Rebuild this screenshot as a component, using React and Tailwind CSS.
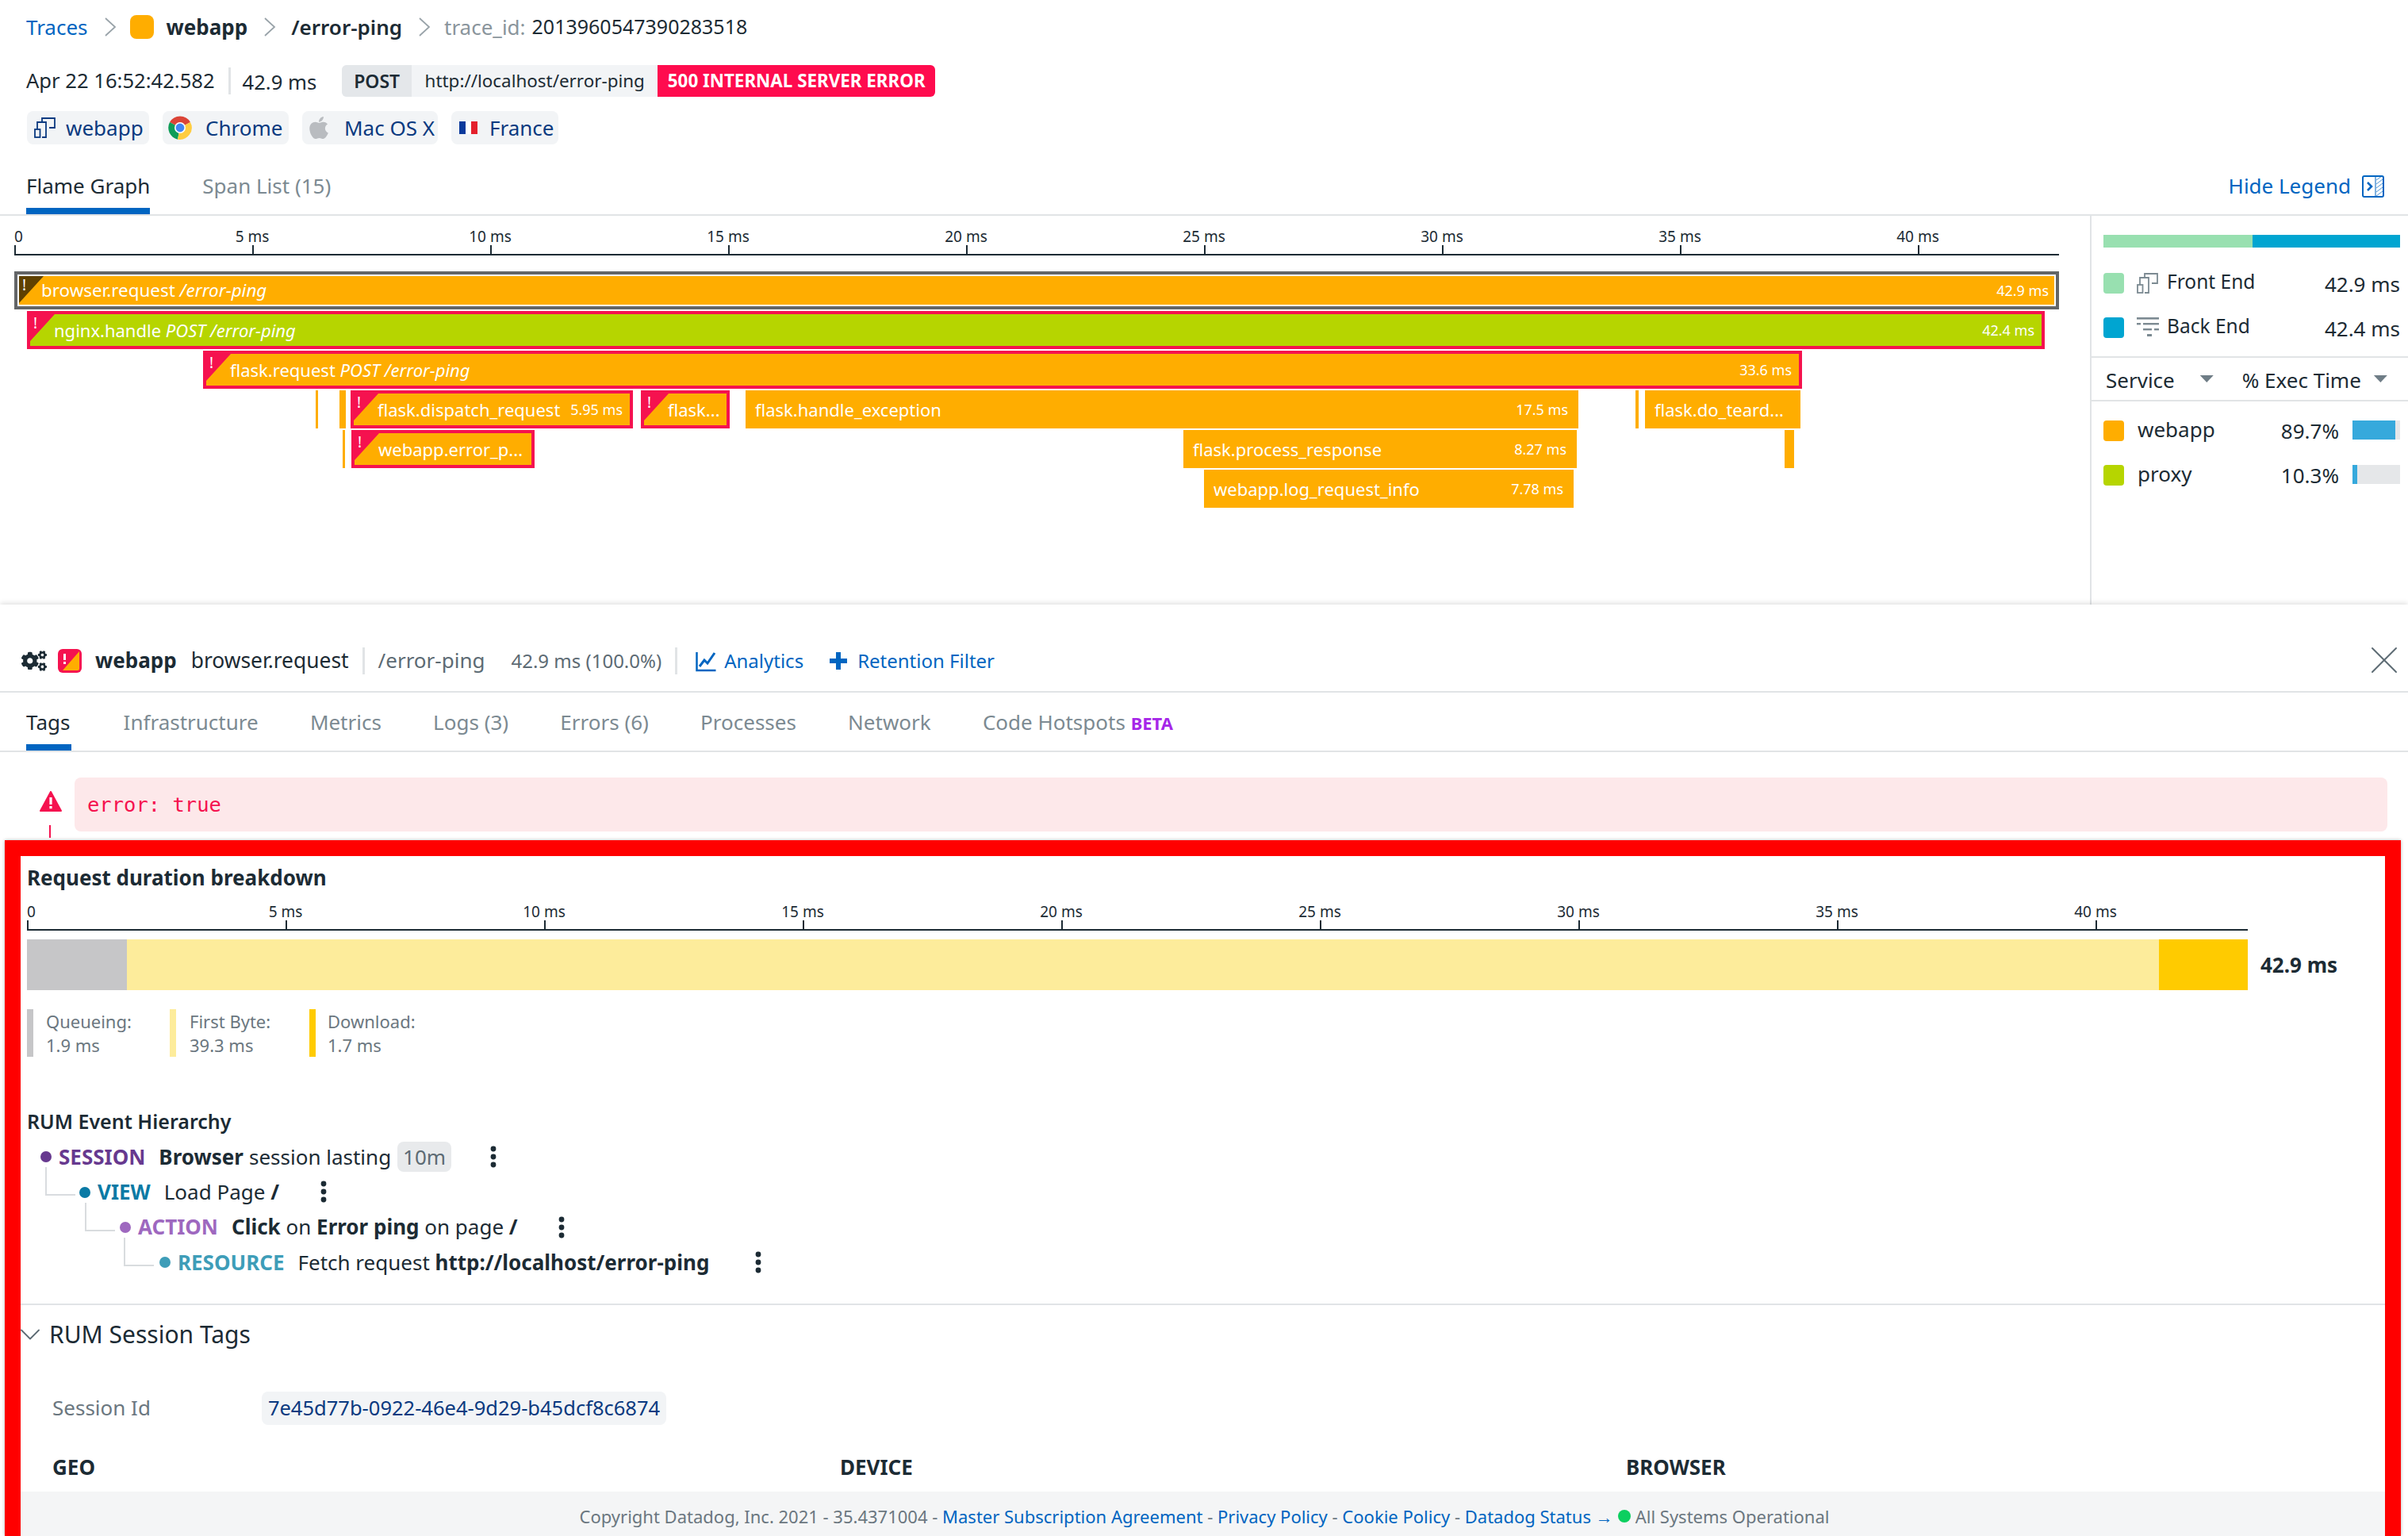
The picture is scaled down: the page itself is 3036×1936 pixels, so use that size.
import React from "react";
import { ChevronDown, X } from "lucide-react";
import { FaApple, FaCogs } from "react-icons/fa";

// flame graph spans, positions are in px on the graph canvas
const spans = [
  { l: 18, w: 2578, t: 70, label: "browser.request", sub: "/error-ping", time: "42.9 ms", kind: "selected" },
  { l: 34, w: 2544, t: 120, label: "nginx.handle", sub: "POST /error-ping", time: "42.4 ms", kind: "error", color: "bg-[#b6d500]" },
  { l: 256, w: 2016, t: 170, label: "flask.request", sub: "POST /error-ping", time: "33.6 ms", kind: "error" },
  { l: 398, w: 3, t: 220 },
  { l: 428, w: 8, t: 220 },
  { l: 442, w: 356, t: 220, label: "flask.dispatch_request", time: "5.95 ms", kind: "error" },
  { l: 808, w: 112, t: 220, label: "flask...", kind: "error" },
  { l: 940, w: 1050, t: 220, label: "flask.handle_exception", time: "17.5 ms" },
  { l: 2062, w: 4, t: 220 },
  { l: 2074, w: 196, t: 220, label: "flask.do_teard..." },
  { l: 432, w: 3, t: 270 },
  { l: 443, w: 231, t: 270, label: "webapp.error_p...", kind: "error" },
  { l: 1492, w: 496, t: 270, label: "flask.process_response", time: "8.27 ms" },
  { l: 2250, w: 12, t: 270 },
  { l: 1518, w: 466, t: 320, label: "webapp.log_request_info", time: "7.78 ms" },
];

const flameTicks = [0, 5, 10, 15, 20, 25, 30, 35, 40];

const Crumb = ({ className }) => (
  <svg viewBox="0 0 16 24" fill="none" stroke="#99a3a9" strokeWidth="1.8" className={`w-[16px] h-[24px] shrink-0 ${className}`}>
    <path d="M2 1l12 11L2 23" />
  </svg>
);

const FrontEndIcon = ({ className }) => (
  <svg viewBox="0 0 27 26" fill="none" stroke="currentColor" strokeWidth="1.8" className={className}>
    <rect x="1" y="15" width="6.5" height="10" />
    <path d="M4 15V6h11v19h-5" />
    <path d="M10 6V1h16v12h-7" />
  </svg>
);

const BackEndIcon = ({ className }) => (
  <svg viewBox="0 0 28 26" fill="currentColor" className={className}>
    <rect x="0" y="0" width="28" height="2.6" />
    <rect x="0" y="7" width="5" height="2.4" />
    <rect x="8" y="7" width="20" height="2.4" />
    <rect x="8" y="14" width="11" height="2.4" />
    <rect x="22" y="14" width="6" height="2.4" />
    <rect x="13" y="21" width="6" height="3" />
  </svg>
);

const ChromeIcon = () => (
  <svg viewBox="0 0 32 32" className="w-[32px] h-[32px]">
    <path d="M16 16 L3 9 A15 15 0 0 1 29 9 Z" fill="#db4437" />
    <path d="M16 16 L3 9 A15 15 0 0 0 13 30.7 Z" fill="#0f9d58" />
    <path d="M16 16 L29 9 A15 15 0 0 1 13 30.7 Z" fill="#ffcd40" />
    <circle cx="16" cy="16" r="7" fill="#fff" />
    <circle cx="16" cy="16" r="5.4" fill="#4285f4" />
  </svg>
);

const Chip = ({ icon, className, children }) => (
  <div className={`h-[42px] flex items-center rounded-[8px] bg-[#f2f4f6] text-[#0b3a80] text-[26px] ${className}`}>
    {icon}
    {children}
  </div>
);

const Span = ({ span }) => {
  const { l, w, t, label, sub, time, kind, color } = span;
  const bg = color || "bg-[#ffad00]";
  const isError = kind === "error";
  const isSelected = kind === "selected";
  return (
    <div
      className={`absolute h-[48px] text-white ${isSelected ? "text-[22.4px]" : "text-[22px]"} ${
        isSelected ? "border-[4px] border-[#636567]" : isError ? "border-[4px] border-[#f5124f]" : ""
      }`}
      style={{ left: l, width: w, top: t }}
    >
      <div className={`relative h-full flex items-center justify-between whitespace-nowrap ${bg} ${isSelected ? "border-[2px] border-white" : ""}`}>
        {(isError || isSelected) && (
          <>
            <div className={`absolute top-0 left-0 w-[31px] h-[34px] [clip-path:polygon(0_0,100%_0,0_100%)] ${isSelected ? "bg-[#5f4100]" : "bg-[#f5124f]"}`} />
            <span className="absolute left-[4px] top-[1px] text-[19px] leading-[20px]">!</span>
          </>
        )}
        {label && (
          <span className={isError ? "pl-[30px]" : isSelected ? "pl-[28px]" : "pl-[12px]"}>
            {label} {sub && <i>{sub}</i>}
          </span>
        )}
        {time && <span className={`text-[18px] ${isError ? "pr-[9px]" : isSelected ? "pr-[7px]" : "pr-[13px]"}`}>{time}</span>}
      </div>
    </div>
  );
};

const Caret = () => <div className="w-[17px] h-[9px] bg-[#6f7d86] [clip-path:polygon(0_0,100%_0,50%_100%)]" />;

const Swatch = ({ color }) => <div className={`w-[26px] h-[26px] rounded-[4px] shrink-0 ${color}`} />;

const Dots = ({ className }) => (
  <svg viewBox="0 0 8 28" fill="#1c2b34" className={`w-[8px] h-[28px] absolute ${className}`}>
    <circle cx="4" cy="4" r="3.4" />
    <circle cx="4" cy="14" r="3.4" />
    <circle cx="4" cy="24" r="3.4" />
  </svg>
);

const Elbow = ({ className }) => <div className={`absolute w-[38px] h-[36px] border-l-2 border-b-2 border-[#d9dcdf] ${className}`} />;

const Hierarchy = ({ indent, dot, tagColor, tag, children }) => (
  <div className="h-[44.4px] flex items-center text-[26px] whitespace-nowrap relative" style={{ paddingLeft: indent }}>
    <div className={`w-[14px] h-[14px] rounded-full ${dot}`} />
    <span className={`ml-[9px] mr-[17px] font-bold ${tagColor}`}>{tag}</span>
    {children}
  </div>
);

export default function App() {
  return (
    <div className="w-[3036px] h-[1936px] overflow-hidden bg-white flex flex-col font-['Noto_Sans',sans-serif] text-[#1c2b34]">
      {/* trace header */}
      <div className="h-[762px] shrink-0 flex flex-col">
        <div className="h-[68px] pl-[33px] flex items-center text-[26px] whitespace-nowrap">
          <span className="text-[#0065c1]">Traces</span>
          <Crumb className="ml-[20px]" />
          <div className="w-[30px] h-[30px] ml-[17px] rounded-[8px] bg-[#ffad00]" />
          <span className="ml-[16px] font-bold">webapp</span>
          <Crumb className="ml-[20px]" />
          <span className="ml-[19px] font-semibold">/error-ping</span>
          <Crumb className="ml-[20px]" />
          <span className="ml-[17px] text-[#8a959c]">trace_id:</span>
          <span className="ml-[8px] text-[25px]">2013960547390283518</span>
        </div>
        <div className="mt-[14px] h-[40px] pl-[33px] flex items-center text-[25.6px] whitespace-nowrap">
          <span>Apr 22 16:52:42.582</span>
          <div className="w-[3px] h-[34px] ml-[17px] mr-[15px] bg-[#e1e4e6]" />
          <span className="pt-[4px]">42.9 ms</span>
          <div className="ml-[32px] flex h-[40px] items-center rounded-[6px] overflow-hidden bg-[#f2f4f6] text-[22.4px]">
            <div className="w-[88px] h-full flex items-center justify-center bg-[#e4e7ea] font-semibold text-[23px]">POST</div>
            <div className="w-[310px] h-full flex items-center justify-center">http://localhost/error-ping</div>
            <div className="w-[350px] h-full flex items-center justify-center bg-[#ff0b4e] text-white font-bold">500 INTERNAL SERVER ERROR</div>
          </div>
        </div>
        <div className="mt-[18px] pl-[34px] flex gap-[17px] whitespace-nowrap">
          <Chip className="w-[154px] pl-[9px] gap-[13px]" icon={<FrontEndIcon className="w-[27px] h-[26px] shrink-0" />}>
            webapp
          </Chip>
          <Chip className="w-[159px] pl-[6px] gap-[16px]" icon={<ChromeIcon />}>
            Chrome
          </Chip>
          <Chip className="w-[171px] pl-[6px] gap-[17px]" icon={<FaApple className="w-[30px] h-[32px] text-[#b9bcc0] shrink-0" />}>
            Mac OS X
          </Chip>
          <Chip
            className="w-[135px] pl-[10px] gap-[15px]"
            icon={
              <div className="flex w-[23px] h-[16px] shrink-0">
                <div className="flex-1 bg-[#0b3a9c]" />
                <div className="flex-1 bg-white" />
                <div className="flex-1 bg-[#e4202c]" />
              </div>
            }
          >
            France
          </Chip>
        </div>
        <div className="h-[90px] flex items-end justify-between pl-[33px] pr-[30px] border-b-[2px] border-[#e1e4e6] text-[26px] whitespace-nowrap shrink-0">
          <div className="flex gap-[66px]">
            <div className="h-[55px] border-b-[8px] border-[#0065c1]">Flame Graph</div>
            <div className="text-[#7c8a92]">Span List (15)</div>
          </div>
          <div className="h-[71px] flex items-center gap-[14px] text-[#0065c1]">
            Hide Legend
            <svg viewBox="0 0 28 28" fill="none" stroke="currentColor" className="w-[28px] h-[28px]">
              <rect x="1" y="1" width="26" height="26" rx="2" strokeWidth="2" />
              <path d="M7 9l5 5-5 5" strokeWidth="2.6" />
              <path d="M18 6l7-5M18 11l8-6M18 16l8-6M18 21l8-6M18 26l8-6" strokeWidth="1" opacity="0.7" />
              <path d="M17 1v26" strokeWidth="1" />
            </svg>
          </div>
        </div>
        <div className="flex-1 flex">
          <div className="w-[2635px] relative shrink-0">
            {/* axis */}
            <div className="absolute left-[18px] top-[48px] w-[2578px] h-[2px] bg-[#1c2b34]" />
            {flameTicks.map((tick) => (
              <div key={tick} className="absolute top-[37px] w-[2px] h-[13px] bg-[#1c2b34]" style={{ left: 18 + tick * 60 }}>
                <span className={`absolute -top-[24px] text-[19px] leading-[26px] whitespace-nowrap ${tick === 0 ? "left-0" : "-translate-x-1/2"}`}>
                  {tick === 0 ? "0" : `${tick} ms`}
                </span>
              </div>
            ))}
            {spans.map((s) => (
              <Span key={`${s.l}-${s.t}`} span={s} />
            ))}
          </div>
          {/* legend */}
          <div className="flex-1 border-l-[2px] border-[#e1e4e6] flex flex-col text-[26px] whitespace-nowrap">
            <div className="mt-[24px] mx-[15px] w-[374px] h-[16px] flex">
              <div className="w-[188px] bg-[#98e0b0]" />
              <div className="flex-1 bg-[#00a5d1]" />
            </div>
            <div className="mt-[32px] ml-[15px] w-[374px] h-[26px] flex items-center">
              <Swatch color="bg-[#98e0b0]" />
              <FrontEndIcon className="w-[27px] h-[26px] ml-[16px] text-[#7c8a92]" />
              <span className="ml-[11px] text-[24.5px] pb-[4px]">Front End</span>
              <span className="ml-auto pt-[3px]">42.9 ms</span>
            </div>
            <div className="mt-[30px] ml-[15px] w-[374px] h-[26px] flex items-center">
              <Swatch color="bg-[#00a5d1]" />
              <BackEndIcon className="w-[28px] h-[26px] ml-[16px] text-[#7c8a92]" />
              <span className="ml-[10px] text-[24.5px] pb-[4px]">Back End</span>
              <span className="ml-auto pt-[3px]">42.4 ms</span>
            </div>
            <div className="mt-[23px] h-[57px] border-y-[2px] border-[#e1e4e6] flex items-center pl-[18px]">
              <span className="pt-[3px]">Service</span>
              <div className="ml-[32px]">
                <Caret />
              </div>
              <span className="ml-[36px] pt-[3px]">% Exec Time</span>
              <div className="ml-[16px]">
                <Caret />
              </div>
            </div>
            <div className="mt-[24px] ml-[15px] w-[374px] h-[26px] flex items-center">
              <Swatch color="bg-[#ffad00]" />
              <span className="ml-[17px] pb-[3px]">webapp</span>
              <span className="ml-auto">89.7%</span>
              <div className="ml-[17px] w-[60px] h-[24px] bg-[#e5e7e9] self-start">
                <div className="h-full bg-[#36a9dc]" style={{ width: "89.7%" }} />
              </div>
            </div>
            <div className="mt-[30px] ml-[15px] w-[374px] h-[26px] flex items-center">
              <Swatch color="bg-[#b6d500]" />
              <span className="ml-[17px] pb-[3px]">proxy</span>
              <span className="ml-auto">10.3%</span>
              <div className="ml-[17px] w-[60px] h-[24px] bg-[#e5e7e9] self-start">
                <div className="h-full bg-[#36a9dc]" style={{ width: "10.3%" }} />
              </div>
            </div>
          </div>
        </div>
      </div>

      {/* span panel */}
      <div className="flex-1 min-h-0 flex flex-col shadow-[0_-2px_6px_rgba(0,0,0,0.12)] relative">
        <div className="h-[111px] shrink-0 border-b-[2px] border-[#e1e4e6] flex items-center pl-[27px] pt-[32px] text-[26px] whitespace-nowrap">
          <FaCogs className="w-[32px] h-[30px]" />
          <svg viewBox="0 0 30 30" className="w-[30px] h-[30px] ml-[14px]">
            <rect width="30" height="30" rx="6" fill="#f5124f" />
            <path d="M27 3v22a2 2 0 0 1-2 2H6z" fill="#ffad00" />
            <rect x="7" y="6" width="3" height="8" fill="#fff" />
            <rect x="7" y="16" width="3" height="3" fill="#fff" />
          </svg>
          <span className="ml-[17px] font-bold">webapp</span>
          <span className="ml-[18px] text-[26.4px]">browser.request</span>
          <div className="w-[3px] h-[34px] mx-[17px] bg-[#e1e4e6]" />
          <span className="text-[#5d6b74]">/error-ping</span>
          <span className="ml-[33px] text-[24px] text-[#5d6b74]">42.9 ms (100.0%)</span>
          <div className="w-[3px] h-[34px] ml-[17px] mr-[18px] bg-[#e1e4e6]" />
          <svg viewBox="0 0 26 28" fill="none" stroke="#0065c1" className="w-[26px] h-[28px] ml-[5px]">
            <path d="M1.5 3v23h24" strokeWidth="2.5" />
            <path d="M5 21l6-8 4 4 9-13" strokeWidth="3" />
          </svg>
          <span className="ml-[10px] text-[24px] text-[#0065c1]">Analytics</span>
          <svg viewBox="0 0 22 22" fill="#0065c1" className="w-[22px] h-[22px] ml-[33px]">
            <path d="M8 0h6v8h8v6h-8v8H8v-8H0V8h8z" />
          </svg>
          <span className="ml-[13px] text-[24px] text-[#0065c1]">Retention Filter</span>
          <X className="ml-auto w-[60px] h-[60px] text-[#5d6b74] -mt-[2px]" strokeWidth={0.8} />
        </div>
        <div className="h-[75px] shrink-0 border-b-[2px] border-[#e1e4e6] flex items-end pl-[33px] gap-[65.2px] text-[26px] text-[#7c8a92] whitespace-nowrap">
          <div className="h-[55px] pr-[2px] border-b-[8px] border-[#0065c1] text-[#1c2b34]">Tags</div>
          {["Infrastructure", "Metrics", "Logs (3)", "Errors (6)", "Processes", "Network"].map((t) => (
            <div key={t} className="h-[55px]">
              {t}
            </div>
          ))}
          <div className="h-[55px]">
            Code Hotspots <span className="text-[22px] font-bold text-[#a626e8]">BETA</span>
          </div>
        </div>
        <div className="mt-[32px] h-[68px] shrink-0 flex relative">
          <div className="w-[94px] pl-[50px] pt-[17px] shrink-0">
            <svg viewBox="0 0 28 26" className="w-[28px] h-[26px]">
              <path d="M14 1L1 25h26z" fill="#f5124f" stroke="#f5124f" strokeLinejoin="round" strokeWidth="2" />
              <rect x="12.4" y="8" width="3.2" height="9" fill="#fff" />
              <rect x="12.4" y="19" width="3.2" height="3.2" fill="#fff" />
            </svg>
          </div>
          <div className="absolute left-[62px] top-[60px] w-[2px] h-[16px] bg-[#f5124f]" />
          <div className="w-[2916px] bg-[#fde8ea] rounded-[8px] flex items-center pl-[16px] font-['DejaVu_Sans_Mono',monospace] text-[25.5px] text-[#f5124f]">
            error: true
          </div>
        </div>

        {/* outlined section */}
        <div className="mt-[11px] ml-[6px] w-[3021px] flex-1 min-h-0 border-[20px] border-b-0 border-[#ff0000] shadow-[0_0_4px_rgba(0,0,0,0.3)] flex flex-col">
          <div className="pl-[8px] pt-[9px] h-[46px] text-[26px] leading-[36px] font-bold shrink-0">Request duration breakdown</div>
          <div className="mt-[5px] ml-[8px] w-[2800px] h-[43px] relative shrink-0 border-b-[2px] border-[#1c2b34]">
            {flameTicks.map((tick) => (
              <div key={tick} className="absolute top-[30px] w-[2px] h-[13px] bg-[#1c2b34]" style={{ left: tick * 65.2 }}>
                <span className={`absolute -top-[24px] text-[19px] leading-[26px] whitespace-nowrap ${tick === 0 ? "left-0" : "-translate-x-1/2"}`}>
                  {tick === 0 ? "0" : `${tick} ms`}
                </span>
              </div>
            ))}
          </div>
          <div className="mt-[11px] ml-[8px] h-[64px] flex items-center shrink-0">
            <div className="w-[126px] h-full bg-[#c6c6c8]" />
            <div className="w-[2562px] h-full bg-[#fdec9b]" />
            <div className="w-[112px] h-full bg-[#ffcb00]" />
            <span className="ml-[16px] text-[26px] font-bold">42.9 ms</span>
          </div>
          <div className="mt-[24px] ml-[8px] h-[60px] flex text-[22px] leading-[30px] text-[#6b7780] shrink-0">
            <div className="w-[180px] border-l-[8px] border-[#c6c6c8] pl-[16px]">
              Queueing:
              <br />
              1.9 ms
            </div>
            <div className="w-[176px] border-l-[8px] border-[#fdec9b] pl-[17px]">
              First Byte:
              <br />
              39.3 ms
            </div>
            <div className="border-l-[8px] border-[#ffcb00] pl-[15px]">
              Download:
              <br />
              1.7 ms
            </div>
          </div>
          <div className="mt-[65px] pl-[8px] h-[32px] text-[25px] leading-[32px] font-semibold shrink-0">RUM Event Hierarchy</div>
          <div className="mt-[7px] shrink-0 relative">
            <Hierarchy indent={25} dot="bg-[#67398f]" tagColor="text-[#67398f]" tag="SESSION">
              <b>Browser</b>
              <span className="ml-[7px]">session lasting</span>
              <span className="ml-[8px] h-[38px] w-[68px] flex items-center justify-center rounded-[8px] bg-[#e8eaec] text-[#5d6b74]">10m</span>
              <Dots className="left-[592px] top-[8px]" />
            </Hierarchy>
            <Hierarchy indent={74} dot="bg-[#0a7aa5]" tagColor="text-[#0a7aa5]" tag="VIEW">
              <span>
                Load Page <b>/</b>
              </span>
              <Dots className="left-[378px] top-[8px]" />
              <Elbow className="left-[31px] -top-[9px]" />
            </Hierarchy>
            <Hierarchy indent={125} dot="bg-[#9e68bf]" tagColor="text-[#9e68bf]" tag="ACTION">
              <span>
                <b>Click</b> on <b>Error ping</b> on page <b>/</b>
              </span>
              <Dots className="left-[678px] top-[8px]" />
              <Elbow className="left-[81px] -top-[9px]" />
            </Hierarchy>
            <Hierarchy indent={175} dot="bg-[#3e9db8]" tagColor="text-[#3e9db8]" tag="RESOURCE">
              <span>
                Fetch request <b>http://localhost/error-ping</b>
              </span>
              <Dots className="left-[926px] top-[8px]" />
              <Elbow className="left-[130px] -top-[9px]" />
            </Hierarchy>
          </div>
          <div className="mt-[29px] h-[76px] shrink-0 border-t-[2px] border-[#e1e4e6] flex items-center text-[30px]">
            <ChevronDown className="w-[44px] h-[44px] -ml-[10px] text-[#5d6b74] shrink-0" strokeWidth={1} />
            <span className="ml-[2px]">RUM Session Tags</span>
          </div>
          <div className="mt-[35px] h-[42px] pl-[40px] flex items-center text-[26px] shrink-0">
            <span className="w-[264px] text-[#6b7780]">Session Id</span>
            <span className="h-full w-[510px] flex items-center justify-center rounded-[8px] bg-[#f2f4f6] text-[#0b3a80] text-[25.5px]">7e45d77b-0922-46e4-9d29-b45dcf8c6874</span>
          </div>
          <div className="mt-[35px] pl-[40px] h-[36px] grid grid-cols-[993px_991px_1fr] text-[26px] leading-[36px] font-bold shrink-0">
            <span>GEO</span>
            <span>DEVICE</span>
            <span>BROWSER</span>
          </div>
          <div className="mt-auto h-[56px] shrink-0 bg-[#f4f5f6] flex items-center justify-center text-[22px] text-[#6b7780] whitespace-nowrap pt-[6px] pl-[4px]">
            Copyright Datadog, Inc. 2021 - 35.4371004 -&nbsp;
            <span className="text-[#0065c1]">Master Subscription Agreement</span>&nbsp;-&nbsp;
            <span className="text-[#0065c1]">Privacy Policy</span>&nbsp;-&nbsp;
            <span className="text-[#0065c1]">Cookie Policy</span>&nbsp;-&nbsp;
            <span className="text-[#0065c1]">
              Datadog Status <b>→</b>
            </span>
            <div className="w-[16px] h-[16px] mx-[6px] rounded-full bg-[#0ccf5f]" />
            All Systems Operational
          </div>
        </div>
      </div>
    </div>
  );
}
